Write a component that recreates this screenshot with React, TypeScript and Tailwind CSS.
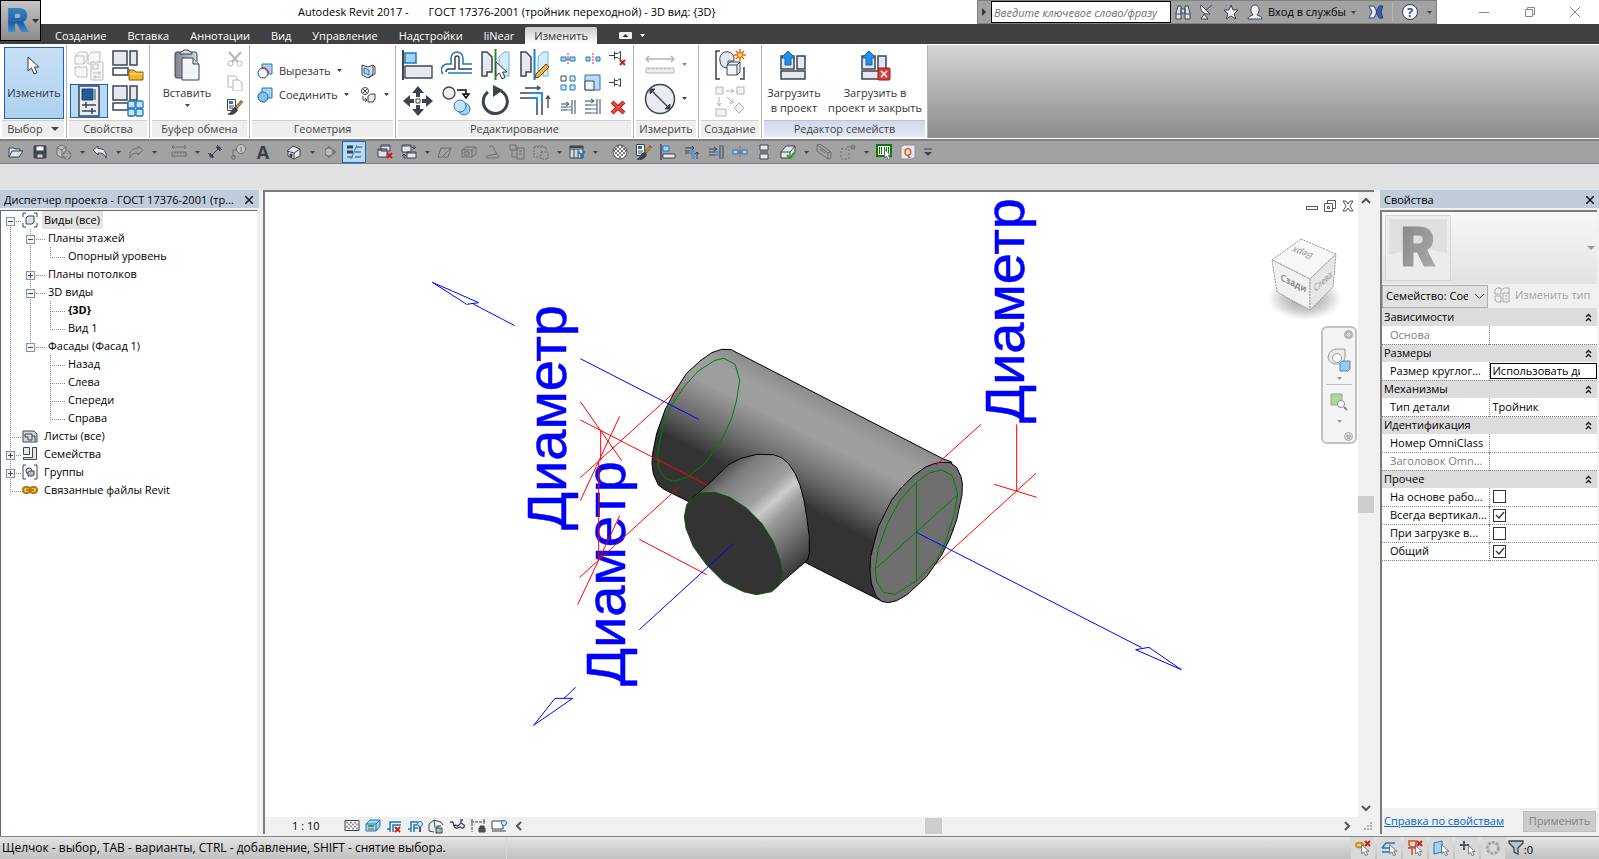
import { useState, type ReactNode } from 'react';

const INK = '#3b4452';
const BLUE = '#1d78bd';
const SKY = '#a6d3f2';
const MUTE = '#b4b4b4';

interface IconProps {
  w?: number;
  h?: number;
  children: ReactNode;
}

function Icon({ w = 16, h = w, children }: IconProps) {
  return (
    <svg width={w} height={h} viewBox={`0 0 ${w} ${h}`} fill="none" stroke={INK} className="shrink-0" aria-hidden="true">
      {children}
    </svg>
  );
}

function Caret({ color = '#444' }: { color?: string }) {
  return (
    <svg width="5" height="3" viewBox="0 0 5 3" fill={color} className="shrink-0" aria-hidden="true">
      <path d="M0 0h5L2.5 3z" />
    </svg>
  );
}

/* ---------- shared icon parts ---------- */

const Pointer = ({ x = 0, y = 0, s = 1 }) => (
  <path transform={`translate(${x} ${y}) scale(${s})`} d="M1 1v14l3.5-3 2.5 6 3-1.5-2.5-5.5h4.5z" fill="#fff" stroke="#333b48" />
);

const RedCross = ({ x = 0, y = 0 }) => (
  <path d={`M${x} ${y}l5 5m0-5l-5 5`} stroke="#c8201c" strokeWidth="2" />
);

const Frames = () => (
  <g fill="#e4e8ee" strokeWidth="1.5">
    <rect x="1" y="1" width="14" height="14" />
    <path d="M18 1h7v14h-7z" />
    <path d="M1 18h15v7H1z" fill="#fff" />
  </g>
);

const Trim = () => (
  <>
    <path d="M1 4h9M8 2l2 2-2 2M13 15V8M11 10l2-2 2 2" />
    <path d="M1 7h4M1 9h4" />
    <path d="M5 7h5v8M5 9h3v6" stroke="#1e88e5" />
  </>
);

const AlignIcon = () => (
  <Icon>
    <path d="M1 0v16" strokeWidth="1.500" />
    <path d="M3 2h6v5H3z" fill={SKY} stroke={BLUE} />
    <path d="M3 10h12v4H3z" fill="#eee" />
  </Icon>
);

const SplitIcon = () => (
  <Icon>
    <path d="M1 6h5v4H1zM10 6h5v4h-5zM6 8h4" fill={SKY} stroke={BLUE} />
    <path d="M8 2v12" stroke="#d23" strokeDasharray="2 1" />
  </Icon>
);

const ExtendIcon = () => (
  <Icon>
    <path d="M1 5h7M6 3l3 2-3 2M12 1v14M15 1v14" />
    <path d="M1 8h6M1 11h6" />
    <path d="M7 8h5M7 11h5" stroke="#1e88e5" />
  </Icon>
);

const BrushIcon = () => (
  <Icon>
    <path d="M.5 .5h8v11h-8z" fill="#fff" />
    <path d="M2 2h4v3H2z" fill={BLUE} stroke="none" />
    <path d="M2 7h5M2 9h4" />
    <path d="M15 2L9 9" stroke="#8a6a2a" strokeWidth="3" />
    <path d="M14.500 3L10 8" stroke="#e0b04a" />
    <path d="M1 15c3 0 3-4 6-6 2-1 4 1 3 3-2 3-5 4-9 3z" fill={INK} />
  </Icon>
);

const Ruler = ({ color = MUTE }) => (
  <g stroke={color}>
    <path d="M1 3h14M3 1L1 3l2 2M13 1l2 2-2 2M1 8h14v4H1zM4 8v2M7 8v2M10 8v2M13 8v2" />
  </g>
);

/* ---------- ribbon icons ---------- */

const FamilyTypesIcon = () => (
  <Icon w={32}>
    <g stroke="#bdbdbd" fill="#f7f7f7">
      <path d="M2 6l4-4h8v8l-3 4H2zM15 6l4-4h8v8l-2 4H15zM2 17h12v10H4l-2-3zM2 6h9v8" />
      <path d="M18 12h12v18H18z" />
      <path d="M20 14h5v5h-5zM20 23h8M20 27h8M26 21v4M22 25v4" />
    </g>
  </Icon>
);

const FolderIcon = () => (
  <Icon w={32}>
    <Frames />
    <path d="M17 20h5l2 2h7v8H17z" fill="#f0b62c" stroke="#8a5d0c" />
    <path d="M17 24h14" stroke="#fbe08a" />
  </Icon>
);

const PropertiesIcon = () => (
  <Icon w={32}>
    <path d="M6 1h20v30H6z" fill="#e9ecf0" strokeWidth="1.500" />
    <path d="M9 4h11v11H9z" fill="#215a94" stroke="#17426e" />
    <path d="M22 4v11" stroke="#8e98a4" strokeWidth="2" />
    <path d="M9 20h14M9 26h14M13 17v6M19 23v6" strokeWidth="1.500" />
  </Icon>
);

const CategoriesIcon = () => (
  <Icon w={32}>
    <Frames />
    <g fill="#c5e3f7" stroke={BLUE} strokeWidth="1.300">
      <rect x="16" y="16" width="7" height="7" rx="1" />
      <rect x="24" y="16" width="7" height="7" rx="1" />
      <rect x="16" y="24" width="7" height="7" rx="1" />
      <rect x="24" y="24" width="7" height="7" rx="1" />
    </g>
  </Icon>
);

const PasteIcon = () => (
  <Icon w={32}>
    <defs>
      <linearGradient id="board" x1="0" y1="0" x2="1" y2="0">
        <stop offset="0" stopColor="#7b828d" />
        <stop offset="1" stopColor="#d5d8dc" />
      </linearGradient>
    </defs>
    <rect x="4" y="3" width="22" height="26" rx="2" fill="url(#board)" />
    <path d="M9 5c0-3 3-2 4-4h4c1 2 4 1 4 4z" fill="#d9dde2" />
    <path d="M11 9h11l6 6v16H11z" fill="#f3f4f6" />
    <path d="M22 9v6h6" fill="#cfd4da" />
  </Icon>
);

const CutIcon = () => (
  <Icon>
    <g stroke={MUTE}>
      <path d="M2 1l9 10M14 1L5 11" strokeWidth="2" />
      <circle cx="3.500" cy="12.500" r="2.500" />
      <circle cx="12.500" cy="12.500" r="2.500" />
    </g>
  </Icon>
);

const CopyIcon = () => (
  <Icon>
    <g stroke={MUTE} fill="#fff">
      <path d="M1 1h7l2 2v9H1z" />
      <path d="M6 5h6l3 3v8H6z" />
    </g>
  </Icon>
);

const CutGeometryIcon = () => (
  <Icon>
    <path d="M5 1h10v10H5z" fill={SKY} stroke={BLUE} />
    <circle cx="6" cy="10" r="5" fill="#fff" />
    <path d="M5 5a5 5 0 0 1 6 5" stroke="#d22" strokeWidth="1.500" />
  </Icon>
);

const JoinGeometryIcon = () => (
  <Icon>
    <path d="M5 1h10v10h-4a5 5 0 1 1-6-6z" fill={SKY} stroke={BLUE} />
    <circle cx="6" cy="10" r="5" stroke={BLUE} fill="#8cbfe6" />
  </Icon>
);

const PaintFaceIcon = () => (
  <Icon>
    <path d="M2 2l6 2 5-2v9l-5 4-6-3z" fill="#dde1e6" />
    <path d="M4 5l5 2v5l-5-2z" fill={SKY} stroke={BLUE} />
    <path d="M13 2l2 2v7l-7 4" />
  </Icon>
);

const WallJoinIcon = () => (
  <Icon>
    <circle cx="5" cy="4" r="3.500" />
    <path d="M3 2l4 4M7 2L3 6M3 9v4h3M5 11l2 2-2 2" />
    <path d="M8 9l3-2h4v5l-2 3H8z" fill="#eceef1" />
  </Icon>
);

const BigAlignIcon = () => (
  <Icon w={32}>
    <path d="M1 1v30" strokeWidth="2" />
    <path d="M3 4h11v10H3z" fill={SKY} stroke={BLUE} strokeWidth="1.500" />
    <path d="M3 17h27v12H3z" fill="#e6e9ed" strokeWidth="1.300" />
  </Icon>
);

const OffsetIcon = () => (
  <Icon w={32}>
    <path d="M31 15h-9V9a6 6 0 0 0-12 0v6H7a6 6 0 0 0-5 10" stroke={BLUE} strokeWidth="1.500" />
    <path d="M31 20H18V9a2 2 0 0 0-4 0v11H8c-2 0-3 1-3 3" strokeWidth="1.500" />
    <path d="M31 24H7" stroke={BLUE} strokeWidth="1.500" />
  </Icon>
);

const MirrorPickIcon = () => (
  <Icon w={32}>
    <path d="M2 3h5l5 5v15H7v4H2z" fill="#e6e9ed" strokeWidth="1.500" />
    <path d="M29 3h-5l-5 5v15h5v4h5z" fill="#d5ebfa" stroke="#6fb0de" />
    <path d="M15.500 0v31" stroke="#2a8a2a" strokeWidth="2" />
    <Pointer x={15} y={12} />
  </Icon>
);

const MirrorDrawIcon = () => (
  <Icon w={32}>
    <path d="M2 3h5l5 5v15H7v4H2z" fill="#e6e9ed" strokeWidth="1.500" />
    <path d="M29 3h-5l-5 5v15h5v4h5z" fill="#d5ebfa" stroke="#6fb0de" />
    <path d="M15.500 0v31" stroke="#1e7fd2" strokeWidth="2" />
    <path d="M27 15l3 3-10 10-4 1 1-4z" fill="#f2b431" stroke="#5b4620" />
  </Icon>
);

const MoveIcon = () => (
  <Icon w={32}>
    <path d="M16 1l6 7h-4v4h-4V8h-4zM16 31l6-7h-4v-4h-4v4h-4zM1 16l7-6v4h4v4H8v4zM31 16l-7-6v4h-4v4h4v4z" fill={INK} stroke="none" />
    <path d="M14 14h4v4h-4z" />
  </Icon>
);

const CopyElementIcon = () => (
  <Icon w={32}>
    <circle cx="8" cy="8" r="6" fill="#eef0f2" strokeWidth="1.300" />
    <path d="M16 5h9v5M22 9l3 4 3-4z" stroke="#111" strokeWidth="1.500" />
    <circle cx="23" cy="24" r="6" fill={SKY} stroke={BLUE} />
    <circle cx="19" cy="21" r="6" fill="#c5e3f7" stroke={BLUE} />
  </Icon>
);

const RotateIcon = () => (
  <Icon w={32}>
    <path d="M8 7a12 12 0 1 0 13-1" strokeWidth="3" />
    <path d="M13 0l10 5-10 7z" fill={INK} stroke="none" />
  </Icon>
);

const TrimCornerIcon = () => (
  <Icon w={32}>
    <path d="M1 8h10M1 13h10M23 18v12M18 18v12" strokeWidth="1.500" />
    <path d="M11 8h12v10M11 13h7v6" stroke="#2290e4" strokeWidth="2" />
    <path d="M6 3h15M18 1l3 2-3 2M29 23V11M27 14l2-3 2 3" strokeWidth="1.300" />
  </Icon>
);

const SplitGapIcon = () => (
  <Icon>
    <path d="M1 6h4v4H1zM11 6h4v4h-4z" fill={SKY} stroke={BLUE} />
    <path d="M8 2v12" stroke="#d23" strokeDasharray="2 1" />
  </Icon>
);

const UnpinIcon = () => (
  <Icon w={18}>
    <path d="M0 5.500h5M5.500 1.500v8M5.500 3.500h3l3-2v8l-3-2h-3" />
    <RedCross x={11} y={10} />
  </Icon>
);

const PinIcon = () => (
  <Icon w={18}>
    <path d="M0 8.500h5M5.500 4.500v8M5.500 6.500h3l3-2v8l-3-2h-3" />
  </Icon>
);

const ArrayIcon = () => (
  <Icon w={18}>
    <path d="M2 2h5v5H2z" />
    <path d="M11 2h5v5h-5zM2 11h5v5H2zM11 11h5v5h-5z" fill="#cfe7f8" stroke={BLUE} />
  </Icon>
);

const ScaleIcon = () => (
  <Icon w={18}>
    <path d="M1 1h15v15H1z" fill="#b9dcf4" stroke={BLUE} />
    <path d="M1 7h9v9H1z" fill="#f2f3f5" />
  </Icon>
);

const ExtendManyIcon = () => (
  <Icon w={18}>
    <path d="M1 3h8M7 1l3 2-3 2M13 1v15M16 1v15" />
    <path d="M1 7h6M1 11h6M1 15h6" />
    <path d="M7 7h6M7 11h6M7 15h6" stroke="#1e88e5" />
  </Icon>
);

const DeleteIcon = () => (
  <Icon w={18}>
    <path d="M3 4l12 11M15 4L3 15" stroke="#a8201c" strokeWidth="4" />
    <path d="M3 4l12 11M15 4L3 15" stroke="#ee4b45" strokeWidth="2" />
  </Icon>
);

const MeasureIcon = () => (
  <Icon w={32} h={20}>
    <g stroke={MUTE}>
      <path d="M2 4h28M5 1L2 4l3 3M27 1l3 3-3 3" strokeWidth="1.500" />
      <path d="M2 13h28v5H2zM5 13v2M9 13v2M13 13v2M17 13v2M21 13v2M25 13v2" fill="#eee" />
    </g>
  </Icon>
);

const DiameterIcon = () => (
  <Icon w={32}>
    <circle cx="16" cy="16" r="14.500" fill="#e9ebee" strokeWidth="1.500" />
    <path d="M7 7l18 18" strokeWidth="1.500" />
    <path d="M6 6h5l-5 5zM26 26h-5l5-5z" fill={INK} />
  </Icon>
);

const CreateGroupIcon = () => (
  <Icon w={32}>
    <path d="M6 2H2v28h4M26 30h4V18" strokeWidth="1.500" />
    <path d="M6 12a7 7 0 0 1 14-4v4h-6v7a7 7 0 0 1-8-7z" fill="#e4e7eb" />
    <path d="M13 16l3-3h10v10l-3 3H13zM13 16h10v10M23 16l3-3" fill="#f4f5f6" />
    <path d="M26 0v12M20 6h12M22 2l8 8M30 2l-8 8" stroke="#e4661b" strokeWidth="1.500" />
    <circle cx="26" cy="6" r="2.500" fill="#ffe14a" stroke="#e4661b" />
  </Icon>
);

const CreateSimilarIcon = () => (
  <Icon w={32}>
    <g stroke={MUTE} fill="#f3f3f3">
      <path d="M2 2h7v7H2zM23 2h7v7h-7zM2 24h10v7H2zM25 18l5 5-5 5-5-5z" />
      <path d="M12 6h8M17 4l3 2-3 2M5 12v8M3 18l2 3 2-3M13 12l6 6M19 14v4h-4" fill="none" />
    </g>
  </Icon>
);

const LoadIcon = ({ close = false }) => (
  <Icon w={32}>
    <g fill="#e4e8ee" strokeWidth="1.500">
      <path d="M3 6h13v13H3zM19 6h8v13h-8zM3 21h24v8H3z" />
    </g>
    <path d="M10 1l7 7h-4v7H7V8H3z" fill="#2290ea" stroke="#1263ab" />
    {close && (
      <>
        <rect x="19" y="18" width="12" height="12" rx="1" fill="#d6413c" stroke="#8e1a17" />
        <path d="M22 21l6 6M28 21l-6 6" stroke="#fff" strokeWidth="1.500" />
      </>
    )}
  </Icon>
);

/* ---------- quick access toolbar ---------- */

const OFF = '#6f6f6f';

const quickItems: (ReactNode | 'caret' | 'gap')[] = [
  <Icon><path d="M1 13V4h5l1 1h5v2M1 13l3-6h11l-4 6z" fill="#dfe3e8" /></Icon>,
  <Icon><path d="M2 2h12v12H2z" fill={INK} /><path d="M4 2h8v5H4z" fill="#fff" /><path d="M5 10h6v4H5z" fill="#cfd3d8" /></Icon>,
  <Icon><path d="M1 4l4-3 5 2v8l-4 3-5-3zM1 4l5 2v8M6 6l4-3" fill="#bdbdbd" stroke={OFF} /><circle cx="11" cy="11" r="4" fill="#8a8a8a" stroke={OFF} /><path d="M7 11h8M11 7c-2 3-2 5 0 8M11 7c2 3 2 5 0 8" stroke="#bbb" /></Icon>,
  'caret',
  <Icon><path d="M1 6l5-4v2.500c6 0 9 3 8 9.500-1-4-4-5-8-5V11z" fill="#e9ecef" /></Icon>,
  'caret',
  <Icon><path d="M15 6l-5-4v2.500C4 4.500 1 7.500 2 14c1-4 4-5 8-5V11z" stroke={OFF} /></Icon>,
  'caret',
  'gap',
  <Icon><Ruler color={OFF} /></Icon>,
  'caret',
  <Icon><path d="M3 13L13 3M1 9l5 5M10 1l5 5" /><path d="M3 13V9l4 4zM13 3H9l4 4z" fill={INK} /></Icon>,
  <Icon><circle cx="10" cy="5" r="4.500" fill="#c4c4c4" stroke={OFF} /><path d="M5 6H2v6M10 3v5M1 12h3v3H1z" stroke={OFF} /></Icon>,
  <span className="text-lg leading-4 font-bold text-[#3b3f46]">A</span>,
  'gap',
  <Icon><path d="M1 7l6-5 7 3v7l-6 3-6-3V7M8 15V9l6-4M1 7l7 2" fill="#e6e9ec" /><path d="M4 10h2v3H4z" fill={INK} /></Icon>,
  'caret',
  <Icon><path d="M6 2l8 6-8 6z" fill="#7c7c7c" stroke={OFF} /><circle cx="7" cy="8" r="4" fill="#bcbcbc" stroke={OFF} /></Icon>,
  'thin',
  'gap',
  <Icon><path d="M4 1h9v6H4zM1 5h9v8H1z" fill="#dfe2e6" /><path d="M1 6h9M4 2h9" /><RedCross x={10} y={9} /></Icon>,
  <Icon><path d="M1 1h9v7H1zM6 8h9v6H6z" fill="#e6e9ec" /><path d="M1 2h9M6 9h9M13 1v4M11 3l2 2 2-2M3 11v3h2M1 12l2-2 2 2" /></Icon>,
  'caret',
  <Icon><path d="M1 13l3-9h10l-3 9zM6 12l8-8" stroke={OFF} /></Icon>,
  <Icon><path d="M1 6l4-3h10v7l-4 3H1zM1 6h10v7M11 6l4-3M3 8h5v3H3z" stroke={OFF} /></Icon>,
  <Icon><path d="M2 12l9-2c3 0 4 4 1 4H3c-2 0-3-2-1-2zM4 3c2-2 5-1 5 2l3 5" stroke={OFF} /></Icon>,
  <Icon><path d="M1 1h6v5H1zM3 6v7h4M8 4h7v11H8zM10 7h3M10 10h3" stroke={OFF} /></Icon>,
  <Icon><path d="M1 3h12v4M1 3v10h6M3 1v3M6 1v3M9 1v3M8 8h7v7H8z" stroke={OFF} strokeDasharray="2 1" /></Icon>,
  'caret',
  <Icon><path d="M1 2h13v12H1zM1 5h13M5 5v9M9 5v9" fill="#d5d9de" /><path d="M1 3h13" strokeWidth="2" /><path d="M10 7v2l2 1v5M15 7v2l-2 1v5" stroke={BLUE} strokeWidth="1.500" /></Icon>,
  'caret',
  'gap',
  <Icon>
    <circle cx="8" cy="8" r="7" fill="#fff" />
    <path d="M3 5h2M7 5h2M11 5h2M2 7h1M5 7h2M9 7h2M13 7h1M3 9h2M7 9h2M11 9h2M5 11h2M9 11h2M7 13h2M5 3h2M9 3h2" stroke="#777" strokeWidth="2" />
  </Icon>,
  <BrushIcon />,
  <AlignIcon />,
  <Icon><Trim /></Icon>,
  <ExtendIcon />,
  <SplitIcon />,
  <Icon><path d="M4 1h8v5H4zM4 10h8v5H4zM4 8h8" fill="#e6e9ec" /></Icon>,
  <Icon><path d="M1 8l5-6h9v6l-4 6H1zM1 8h9v6M10 8l5-6" fill="#e6e9ec" /><path d="M7 11l3 3 5-6" stroke="#2aa02a" strokeWidth="2" /></Icon>,
  'caret',
  <Icon><path d="M1 1l3-1 11 8v6l-3 1L1 7zM1 1l11 8v6M12 9l3-1M4 5l5 4" stroke={OFF} /></Icon>,
  <Icon><path d="M1 5h8v10H1z" stroke={OFF} strokeDasharray="2 2" /><circle cx="13" cy="3" r="2" stroke={OFF} /><path d="M7 3h8" stroke={OFF} /></Icon>,
  'caret',
  <Icon><path d="M1 1h14v11H1z" fill="#fff" stroke="#0b7a0b" strokeWidth="2" /><path d="M3.500 3v7M5.500 3v7M8.500 3v7M10.500 3v7M12.500 3v7" stroke="#0b7a0b" /><Pointer x={8} y={5} s={0.6} /></Icon>,
  <Icon><path d="M1 3l3-2h11v12l-3 2H1z" fill="#e8e8ec" stroke="#8d919b" /><text x="4" y="12" fontSize="10" fontWeight="700" fill="#e2561d" stroke="none" className="font-['Liberation_Sans',sans-serif]">Q</text></Icon>,
];

function QuickToolbar() {
  return (
    <div className="flex h-[25px] shrink-0 items-center border-t-2 border-b border-[#808080] bg-[#a2a2a2] pl-1">
      {quickItems.map((item, i) => {
        if (item === 'gap') return <span key={i} className="w-[7px]" />;
        if (item === 'caret') {
          return (
            <button key={i} aria-label="Ещё" className="flex h-5 w-3 items-center justify-center">
              <Caret />
            </button>
          );
        }
        if (item === 'thin') {
          return (
            <button key={i} aria-label="Тонкие линии" className="flex h-[22px] w-6 items-center justify-center border border-[#1a66b8] bg-[#b8d9f4]">
              <Icon>
                <path d="M1 3h6M1 8h6" strokeWidth="3" />
                <path d="M1 13h6M10 3h6M9 8h6M9 13h6" />
                <path d="M11 1L5 15" stroke="#1e88e5" />
              </Icon>
            </button>
          );
        }
        return (
          <button key={i} className="flex h-5 w-6 items-center justify-center">
            {item}
          </button>
        );
      })}
      <button aria-label="Настройка панели" className="flex h-5 w-4 items-center justify-center">
        <Icon w={8}>
          <path d="M0 1h8" />
          <path d="M0 4h8L4 8z" fill={INK} stroke="none" />
        </Icon>
      </button>
    </div>
  );
}

/* ---------- title bar, tabs ---------- */

function TitleBar() {
  return (
    <header className="flex h-6 shrink-0 items-center bg-white text-black">
      <div className="flex flex-1 gap-5 pl-[298px] whitespace-pre">
        <span>Autodesk Revit 2017 -</span>
        <span>ГОСТ 17376-2001 (тройник переходной) - 3D вид: {'{3D}'}</span>
      </div>
      <div className="flex h-6 w-[460px] items-center border border-[#808080] bg-[#a2a2a2] pl-1">
        <svg width="4" height="8" viewBox="0 0 4 8" fill="#333" className="mr-[5px]" aria-hidden="true">
          <path d="M0 0l4 4-4 4z" />
        </svg>
        <input
          aria-label="Поиск"
          placeholder="Введите ключевое слово/фразу"
          className="h-[22px] w-[180px] border border-black bg-white px-[2px] italic placeholder:text-[#707070]"
        />
        <button aria-label="Найти" className="ml-1">
          <Icon>
            <path d="M1 15V9l2-7h3v13zM10 15V2h3l2 7v6zM6 5h4v4H6zM1 10h5M10 10h5" fill="#dfe3e8" />
          </Icon>
        </button>
        <button aria-label="Центр связи" className="ml-2">
          <Icon>
            <path d="M2 1c-2 5 3 10 9 9zM7 6l6-5M2 15l3-5 4 5z" fill="#eef0f3" />
          </Icon>
        </button>
        <button aria-label="Избранное" className="ml-2">
          <Icon>
            <path d="M8 1l2 5h5l-4 4 2 5-5-3-5 3 2-5-4-4h5z" fill="#eef0f3" />
          </Icon>
        </button>
        <button className="ml-2 flex items-center gap-[5px] whitespace-nowrap text-black">
          <Icon>
            <path d="M1 15c0-3 3-3 5-4-3-3-3-10 2-10s5 7 2 10c2 1 5 1 5 4z" fill="#eef0f3" />
          </Icon>
          Вход в службы
          <Caret />
        </button>
        <button aria-label="Exchange Apps" className="ml-3">
          <Icon>
            <path d="M1 2h5l3 6-3 6H1l3-6z" fill="#eef0f3" stroke="#2b3f7c" />
            <path d="M15 2h-4L8 8l3 6h4l-2-6z" fill="#3c5cab" stroke="#2b3f7c" />
          </Icon>
        </button>
        <span className="ml-2 h-5 w-px bg-[#b2b2b2]" />
        <button aria-label="Справка" className="ml-2 flex items-center gap-2">
          <svg width="18" height="18" viewBox="0 0 18 18" aria-hidden="true">
            <circle cx="9" cy="9" r="7.500" fill="#fff" stroke="#2e3a52" />
            <text x="9" y="14" textAnchor="middle" fontSize="13" fontWeight="700" fill="#2456b4">?</text>
          </svg>
          <Caret />
        </button>
      </div>
      <div className="flex w-[162px] items-center justify-between pr-[18px] pl-[41px]">
        <button aria-label="Свернуть">
          <Icon w={12}><path d="M1 6.500h10" stroke="#888" /></Icon>
        </button>
        <button aria-label="Восстановить">
          <Icon w={12}><path d="M1.500 3.500h7v7h-7zM3.500 3.500v-2h7v7h-2" stroke="#888" /></Icon>
        </button>
        <button aria-label="Закрыть">
          <Icon w={12}><path d="M1 1l10 10M11 1L1 11" stroke="#888" /></Icon>
        </button>
      </div>
    </header>
  );
}

const TABS = ['Создание', 'Вставка', 'Аннотации', 'Вид', 'Управление', 'Надстройки', 'liNear', 'Изменить'];

function TabBar() {
  const [active, setActive] = useState('Изменить');

  return (
    <nav className="flex h-5 shrink-0 items-end bg-[#404040] pl-[45px]">
      {TABS.map(tab => (
        <button
          key={tab}
          onClick={() => setActive(tab)}
          className={
            tab === active
              ? 'h-[17px] rounded-t-xs bg-linear-to-b from-[#c9c9c9] to-white px-[9px] leading-4 text-[#333]'
              : 'h-[17px] pr-[11px] pl-[10px] leading-4 text-white'
          }
        >
          {tab}
        </button>
      ))}
      <button aria-label="Свернуть ленту" className="ml-[22px] flex h-[17px] items-center gap-2">
        <Icon w={13} h={7}>
          <rect width="13" height="7" rx="1" fill="#eee" stroke="none" />
          <path d="M3.500 5l3-3 3 3z" fill="#333" stroke="none" />
        </Icon>
        <Caret color="#fff" />
      </button>
    </nav>
  );
}

/* ---------- ribbon ---------- */

interface PanelProps {
  title: ReactNode;
  className: string;
  accent?: boolean;
  children: ReactNode;
}

function Panel({ title, className, accent, children }: PanelProps) {
  return (
    <section className={`flex shrink-0 flex-col border-r border-[#b4b4b4] bg-white ${className}`}>
      <div className="flex h-[75px] items-center">{children}</div>
      <h2
        className={`mx-[2px] flex h-[17px] items-center justify-center gap-2 border-t leading-4 whitespace-nowrap text-[#444] ${
          accent ? 'border-[#bcc3da] bg-linear-to-b from-[#d3d8e8] to-[#e6e9f4]' : 'border-[#d0d0d0] bg-[#eeeeee]'
        }`}
      >
        {title}
      </h2>
    </section>
  );
}

function Ribbon() {
  return (
    <div className="flex h-[95px] shrink-0 border-y border-white bg-linear-to-b from-[#d6d6d6] to-[#8c8c8c] text-[#333]">
      <Panel className="w-[67px]" title={<>Выбор <svg width="8" height="4" viewBox="0 0 8 4" fill="#444"><path d="M0 0h8L4 4z" /></svg></>}>
        <button className="ml-1 flex h-[72px] w-[60px] flex-col items-center border border-[#1763b5] bg-linear-to-b from-[#c6dff5] to-[#aed1ef] pt-2">
          <Icon w={14} h={20}><Pointer /></Icon>
          <span className="mt-[9px] leading-4">Изменить</span>
        </button>
      </Panel>

      <Panel className="w-[83px]" title="Свойства">
        <div className="grid grid-cols-2 gap-x-[1px] pl-[3px]">
          <button aria-label="Типоразмеры" className="flex h-9 w-[38px] items-center justify-center"><FamilyTypesIcon /></button>
          <button aria-label="Категории" className="flex h-9 w-[38px] items-center justify-center"><FolderIcon /></button>
          <button aria-label="Свойства" className="flex h-[34px] w-[38px] items-center justify-center border border-[#1763b5] bg-[#b8d8f3]"><PropertiesIcon /></button>
          <button aria-label="Параметры" className="flex h-[34px] w-[38px] items-center justify-center"><CategoriesIcon /></button>
        </div>
      </Panel>

      <Panel className="w-[100px]" title="Буфер обмена">
        <button className="flex h-[72px] w-[74px] flex-col items-center pt-[2px]">
          <PasteIcon />
          <span className="mt-1 mb-[3px] leading-4">Вставить</span>
          <Caret />
        </button>
        <div className="flex flex-col gap-2 pl-[3px]">
          <button aria-label="Вырезать в буфер"><CutIcon /></button>
          <button aria-label="Копировать в буфер"><CopyIcon /></button>
          <button aria-label="Копировать свойства"><BrushIcon /></button>
        </div>
      </Panel>

      <Panel className="w-[146px]" title="Геометрия">
        <div className="flex w-[110px] flex-col gap-2 pl-[7px]">
          <button className="flex items-center gap-[6px] leading-4"><CutGeometryIcon />Вырезать <Caret /></button>
          <button className="flex items-center gap-[6px] leading-4"><JoinGeometryIcon />Соединить <Caret /></button>
        </div>
        <div className="flex flex-col gap-2">
          <button aria-label="Раскрасить"><PaintFaceIcon /></button>
          <button aria-label="Соединение стен" className="flex items-center gap-2"><WallJoinIcon /><Caret /></button>
        </div>
      </Panel>

      <Panel className="w-[238px]" title="Редактирование">
        <div className="grid grid-cols-4 gap-x-[7px] gap-y-1 pl-[6px]">
          <button aria-label="Выровнять"><BigAlignIcon /></button>
          <button aria-label="Смещение"><OffsetIcon /></button>
          <button aria-label="Зеркало — выбрать ось"><MirrorPickIcon /></button>
          <button aria-label="Зеркало — нарисовать ось"><MirrorDrawIcon /></button>
          <button aria-label="Перенести"><MoveIcon /></button>
          <button aria-label="Копировать"><CopyElementIcon /></button>
          <button aria-label="Повернуть"><RotateIcon /></button>
          <button aria-label="Обрезать до угла"><TrimCornerIcon /></button>
        </div>
        <div className="grid grid-cols-3 items-center justify-items-center gap-x-[7px] gap-y-[6px] pl-2">
          <button aria-label="Разделить"><SplitIcon /></button>
          <button aria-label="Разделить с зазором"><SplitGapIcon /></button>
          <button aria-label="Открепить"><UnpinIcon /></button>
          <button aria-label="Массив"><ArrayIcon /></button>
          <button aria-label="Масштаб"><ScaleIcon /></button>
          <button aria-label="Закрепить"><PinIcon /></button>
          <button aria-label="Удлинить"><ExtendIcon /></button>
          <button aria-label="Удлинить несколько"><ExtendManyIcon /></button>
          <button aria-label="Удалить"><DeleteIcon /></button>
        </div>
      </Panel>

      <Panel className="w-[65px]" title="Измерить">
        <div className="flex flex-col gap-2 pt-1 pl-[10px]">
          <button aria-label="Измерить" className="flex items-center gap-[6px]"><MeasureIcon /><Caret color="#888" /></button>
          <button aria-label="Размер диаметра" className="flex items-center gap-[6px]"><DiameterIcon /><Caret /></button>
        </div>
      </Panel>

      <Panel className="w-[63px]" title="Создание">
        <div className="flex flex-col gap-1 pl-[15px]">
          <button aria-label="Создать группу"><CreateGroupIcon /></button>
          <button aria-label="Создать подобный"><CreateSimilarIcon /></button>
        </div>
      </Panel>

      <Panel accent className="w-[166px]" title="Редактор семейств">
        <button className="flex h-[72px] w-[64px] flex-col items-center pt-[3px] leading-[15px]">
          <LoadIcon />
          <span className="mt-[3px]">Загрузить<br />в проект</span>
        </button>
        <button className="flex h-[72px] w-[98px] flex-col items-center pt-[3px] leading-[15px] whitespace-nowrap">
          <LoadIcon close />
          <span className="mt-[3px]">Загрузить в<br />проект и закрыть</span>
        </button>
      </Panel>
    </div>
  );
}

/* ---------- project browser ---------- */

interface TreeRow {
  label: string;
  level: 0 | 1 | 2;
  state?: 'open' | 'closed';
  last?: boolean;
  inViews?: boolean;
  icon?: ReactNode;
  bold?: boolean;
}

const TREE: TreeRow[] = [
  { label: 'Виды (все)', level: 0, state: 'open', icon: <><path d="M4 1H1v4M12 1h3v4M4 15H1v-4M12 15h3v-4" /><path d="M4 6l2-2h6v6l-2 2H4z" fill="#dfe3e8" /></> },
  { label: 'Планы этажей', level: 1, state: 'open' },
  { label: 'Опорный уровень', level: 2, last: true, inViews: true },
  { label: 'Планы потолков', level: 1, state: 'closed' },
  { label: '3D виды', level: 1, state: 'open' },
  { label: '{3D}', level: 2, bold: true, inViews: true },
  { label: 'Вид 1', level: 2, last: true, inViews: true },
  { label: 'Фасады (Фасад 1)', level: 1, state: 'open', last: true },
  { label: 'Назад', level: 2 },
  { label: 'Слева', level: 2 },
  { label: 'Спереди', level: 2 },
  { label: 'Справа', level: 2, last: true },
  { label: 'Листы (все)', level: 0, icon: <><path d="M1 3h11l3 3v8H1z" fill="#d5d9de" /><path d="M3 6h7v6H6V9H3zM10 8h3v5" /></> },
  { label: 'Семейства', level: 0, state: 'closed', icon: <path d="M1.500 1.500h6v7h-6zM10.500 1.500h4v12h-13v-2h9z" fill="#e6e9ec" /> },
  { label: 'Группы', level: 0, state: 'closed', icon: <><path d="M4 1H1v14h3M12 1h3v14h-3" /><circle cx="7" cy="7" r="3" fill="#dfe3e8" /><path d="M6 8l2-1h4v4l-2 1H6z" fill="#b6bcc5" /></> },
  { label: 'Связанные файлы Revit', level: 0, last: true, icon: <g stroke="#b07b0a" strokeWidth="2"><rect x="1" y="5" width="7" height="6" rx="3" fill="#f6cf57" /><rect x="8" y="5" width="7" height="6" rx="3" fill="#f6cf57" /><path d="M4 8h8" /></g> },
];

function TreeGuides({ row, index }: { row: TreeRow; index: number }) {
  const x = 8 + row.level * 20;
  const width = [40, 46, 66][row.level];
  const end = [20, 43, 63][row.level];
  const rootLast = row.level === 0 && row.last;

  return (
    <svg width={width} height="18" viewBox={`0 0 ${width} 18`} fill="none" stroke="#8c8c8c" shapeRendering="crispEdges" className="shrink-0" aria-hidden="true">
      <g strokeDasharray="1 1">
        <path d={`M8.500 ${index === 0 ? 10 : 0}V${rootLast ? 10 : 18}`} />
        {row.level === 1 && <path d={`M28.500 0V${row.last ? 10 : 18}`} />}
        {row.level === 2 && row.inViews && <path d="M28.500 0V18" />}
        {row.level === 2 && <path d={`M48.500 0V${row.last ? 10 : 18}`} />}
        <path d={`M${x} 10.500H${end}`} />
      </g>
      {row.state && (
        <>
          <rect x={x - 3.5} y="6.500" width="8" height="8" fill="#f4f4f4" stroke="#8a8f9c" />
          <path d={`M${x - 2} 10.500h5`} stroke="#2b4a9a" />
          {row.state === 'closed' && <path d={`M${x + 0.5} 8v5`} stroke="#2b4a9a" />}
        </>
      )}
      {row.icon && <g transform="translate(20 1)" stroke={INK} shapeRendering="auto">{row.icon}</g>}
    </svg>
  );
}

function ProjectBrowser() {
  return (
    <aside className="flex w-[259px] shrink-0 flex-col">
      <div className="flex h-[18px] items-center justify-between bg-[#bfcddb] px-1 pt-[2px] text-black">
        <h2 className="whitespace-nowrap">Диспетчер проекта - ГОСТ 17376-2001 (тр...</h2>
        <button aria-label="Закрыть диспетчер" className="px-[2px]">
          <Icon w={8}><path d="M0 0l8 8M8 0L0 8" stroke="#111" strokeWidth="1.500" /></Icon>
        </button>
      </div>
      <ul className="mt-[2px] mr-[2px] flex-1 border-t border-l border-[#696969] bg-white pl-px">
        {TREE.map((row, i) => (
          <li key={row.label} className="flex h-[18px] items-center text-black">
            <TreeGuides row={row} index={i} />
            <span className={`leading-[18px] whitespace-nowrap ${row.bold ? 'font-bold' : ''} ${i === 0 ? 'bg-[#e3e3e3] pr-[3px]' : ''} ${row.level === 0 ? 'pl-[2px]' : ''}`}>
              {row.label}
            </span>
          </li>
        ))}
      </ul>
    </aside>
  );
}

/* ---------- 3D view ---------- */

const DIAMETERS = [
  { x: 301, y: 338 },
  { x: 360, y: 494 },
  { x: 759, y: 231 },
];

function TeeModel() {
  return (
    <svg className="absolute inset-0 h-full w-full" role="img" aria-label="Тройник переходной">
      <defs>
        <linearGradient id="run" gradientUnits="userSpaceOnUse" x1="285" y1="65" x2="72" y2="479">
          <stop offset="0" stopColor="#8c8c8c" />
          <stop offset=".12" stopColor="#9e9e9e" />
          <stop offset=".26" stopColor="#9e9e9e" />
          <stop offset=".48" stopColor="#6e6e6e" />
          <stop offset=".68" stopColor="#333" />
          <stop offset="1" stopColor="#333" />
        </linearGradient>
        <linearGradient id="branch" gradientUnits="userSpaceOnUse" x1="200" y1="467" x2="442" y2="742">
          <stop offset="0" stopColor="#555" />
          <stop offset=".1" stopColor="#7c7c7c" />
          <stop offset=".35" stopColor="#a0a0a0" />
          <stop offset=".46" stopColor="#ccc" />
          <stop offset=".58" stopColor="#9c9c9c" />
          <stop offset=".8" stopColor="#6a6a6a" />
          <stop offset="1" stopColor="#3a3a3a" />
        </linearGradient>
      </defs>

      {DIAMETERS.map(d => (
        <text key={d.x} transform={`translate(${d.x} ${d.y}) rotate(-90)`} fontSize="56" fill="#00f" stroke="#00f" strokeWidth=".5" className="font-['Liberation_Sans',sans-serif]">
          Диаметр
        </text>
      ))}

      <g transform="translate(375 138) scale(.33333)" fill="none" strokeWidth="3" strokeLinejoin="round">
        <g stroke="#000">
          <path
            d="M285 65L275 59L245 58L215 68L180 93L140 130L105 183L75 240L50 310L38 370L36 400L40 432L55 465L72 478L148 516L493 696L730 816L940 600L935 396L910 387Z"
            fill="url(#run)"
          />
          <path
            d="M880 402L900 397L930 398L950 412L963 440L967 460L966 495L950 570L930 625L905 675L860 740L800 795L770 812L745 818L725 814L708 798L694 760L690 720L692 680L715 590L755 510L785 472L820 438L855 412Z"
            fill="#6f6f6f"
          />
          <path
            d="M150 510L200 467L265 405L300 386L350 373L400 374L425 383L445 400L465 430L480 465L492 510L500 560L508 620L508 670L503 690L393 784L178 489Z"
            fill="url(#branch)"
          />
        </g>
        <path
          d="M150 510L178 489L225 487L270 502L320 535L365 580L400 635L420 690L428 730L418 765L395 785L350 794L310 785L250 755L200 705L160 650L138 595L133 560L140 525Z"
          fill="#333"
          stroke="#0a5a0a"
        />
        <g stroke="#008000">
          <path d="M252 85L285 103L299 150L290 210L275 265L245 330L195 400L145 440L105 454L75 445L57 417L53 370L68 290L95 225L135 167L175 123L225 91Z" />
          <path d="M905 420L937 437L953 490L945 545L915 640L890 690L830 752L765 793L730 787L710 755L706 715L715 655L740 585L780 510L830 456L870 428Z" />
          <path d="M829 458V755M706 717L950 497" />
        </g>
      </g>

      {/* reference dimension lines */}
      <g transform="translate(155 78) scale(.33333)" fill="none" strokeWidth="3">
        <path
          stroke="#f00"
          d="M481 395L605 572M481 450L860 645M599 439L481 692M775 356L481 623M542 482V572M536 575V868M775 653L479 922M599 737L473 1004M658 808L860 914"
        />
        <path stroke="#f00" d="M1683 463L1548 585M1790 463V663M1723 643L1850 682M1848 610L1548 883" />
        <path stroke="#00f" d="M481 266L836 448M940 821L658 1079M160 102L284 167M37 37L140 103L176 98ZM467 1252L432 1285M405 1285H458L341 1366Z" />
        <path stroke="#00f" d="M1489 787L2165 1133M2147 1139L2187 1132L2284 1199Z" />
      </g>
    </svg>
  );
}

function ViewCube() {
  return (
    <svg width="80" height="88" viewBox="0 0 80 88" className="absolute top-[42px] right-[14px]" role="img" aria-label="Видовой куб">
      <defs>
        <radialGradient id="cubeShadow">
          <stop offset="0" stopColor="#777" stopOpacity=".8" />
          <stop offset=".6" stopColor="#888" stopOpacity=".4" />
          <stop offset="1" stopColor="#888" stopOpacity="0" />
        </radialGradient>
      </defs>
      <ellipse cx="41" cy="65" rx="37" ry="21" fill="url(#cubeShadow)" />
      <g stroke="#999" strokeDasharray="2 1">
        <path d="M37 5L72 20 46 45 8 26z" fill="#f7f7f7" />
        <path d="M8 26L46 45V76L13 58z" fill="#f1f1f1" />
        <path d="M72 20L46 45V76L69 53z" fill="#e6e6e6" />
      </g>
      <g fontSize="9" fill="#8f8f8f">
        <text transform="translate(50 20) rotate(200) skewX(-20)">Верх</text>
        <text transform="translate(16 46) rotate(26) skewX(15)" fontWeight="700">Сзади</text>
        <text transform="translate(51 58) rotate(-42) skewX(-30)" fontSize="8">Слева</text>
      </g>
    </svg>
  );
}

function NavigationBar() {
  return (
    <div className="absolute top-[134px] right-px flex h-[118px] w-9 flex-col items-center rounded-md border-2 border-[#c2c2c2] bg-[#f4f4f4]">
      <button aria-label="Закрыть панель навигации" className="mt-[2px] mr-[2px] self-end">
        <Icon w={9}><circle cx="4.500" cy="4.500" r="4" fill="#bbb" stroke="#aaa" /><path d="M3 3l3 3M6 3L3 6" stroke="#fff" /></Icon>
      </button>
      <button aria-label="Штурвал" className="mt-2">
        <Icon w={26}>
          <path d="M2 11a9 9 0 0 1 9-9h8v9a9 9 0 0 1-17 0z" fill="#ececec" stroke="#9a9a9a" />
          <circle cx="11" cy="11" r="4.500" fill="#fff" stroke="#9a9a9a" />
          <path d="M14 16l2-2h8v8l-2 2h-8z" fill="#9ec7ec" stroke="#4f86b8" />
        </Icon>
      </button>
      <button aria-label="Выбор штурвала" className="py-1"><Caret color="#999" /></button>
      <span className="w-[26px] border-t border-[#bbb]" />
      <button aria-label="Масштаб области" className="mt-2">
        <Icon w={18}>
          <path d="M1 1h11v11H1z" fill="#b3d3a3" stroke="#8fae80" />
          <circle cx="11" cy="11" r="3.500" fill="#fff" stroke="#888" />
          <path d="M14 14l3 3" stroke="#888" strokeWidth="2" />
        </Icon>
      </button>
      <button aria-label="Выбор масштаба" className="py-[9px]"><Caret color="#999" /></button>
      <button aria-label="Параметры панели навигации" className="mt-auto mr-[2px] mb-[2px] self-end">
        <Icon w={9}><circle cx="4.500" cy="4.500" r="4" fill="#ddd" stroke="#aaa" /><path d="M2 4h5M3 6h3" stroke="#888" /></Icon>
      </button>
    </div>
  );
}

const Chevron = ({ d }: { d: string }) => (
  <Icon w={10}><path d={d} stroke="#555" strokeWidth="2" /></Icon>
);

const VIEW_CONTROLS: { name: string; art: ReactNode }[] = [
  { name: 'Уровень детализации', art: <><path d="M1 2.500h14v10H1z" fill="#fff" /><path d="M2 4.500h13M2 8.500h13" stroke="#999" strokeDasharray="2 2" strokeWidth="2" /><path d="M4 6.500h11M4 10.500h11" stroke="#999" strokeDasharray="2 2" strokeWidth="2" /></> },
  { name: 'Визуальный стиль', art: <><path d="M1 6l4-4h10v6l-4 5H1zM1 6h10v7M11 6l4-4" fill={SKY} stroke={BLUE} /><path d="M3 8h6" stroke="#3a3" strokeWidth="2" /><path d="M3 11h6" stroke="#c33" /></> },
  { name: 'Подрезка вида', art: <><path d="M4 14V4h11M1 11h3M7 14V7h8" stroke={BLUE} strokeWidth="1.500" /><RedCross x={9} y={9} /></> },
  { name: 'Границы подрезки', art: <><path d="M4 14V4h7M1 11h3M7 14V7h3M7 10h4" stroke={BLUE} strokeWidth="1.500" /><circle cx="13" cy="6" r="2.500" fill="#d5ebfa" stroke={BLUE} /><path d="M13 9v5" stroke="#555" strokeWidth="2" /></> },
  { name: 'Блокировка вида', art: <><path d="M1 6l5-4 7 2 2 3M1 6v7l5 1M6 2l1 8" fill="#eee" /><path d="M8 10h6v5H8zM9 10V8h4" fill="#9cc0b4" /></> },
  { name: 'Временное скрытие', art: <path d="M1 4h3M4 4l1 4a3 3 0 0 0 4 2l2-1 2 1a2 2 0 0 0 2-3l-3-2-3 3-4-1M12 5V2h2" strokeWidth="1.300" /> },
  { name: 'Показ скрытого', art: <><path d="M2 1v13M1 4h14M14 1v5" strokeDasharray="3 1" /><path d="M9 10h6v4H9zM10 10V8h4v2" fill="#555" /></> },
  { name: 'Свойства вида', art: <><path d="M1 3h11v8H1zM1 13h14" fill="#fff" /><circle cx="13" cy="5" r="2.500" fill="#d5ebfa" stroke={BLUE} /></> },
];

function Viewport() {
  return (
    <main className="mb-[2px] ml-1 flex min-w-0 flex-1 flex-col border-t-2 border-l-2 border-[#7c7c7c] bg-[#f0f0f0]">
      <div className="flex min-h-0 flex-1">
        <div className="relative min-w-0 flex-1 overflow-hidden bg-white">
          <TeeModel />
          <div className="absolute top-2 right-1 flex gap-[6px]">
            <button aria-label="Свернуть вид"><Icon w={12}><path d="M.5 6.500h11v3H.5z" stroke="#555" /></Icon></button>
            <button aria-label="Развернуть вид"><Icon w={12}><path d="M.5 3.500h8v8h-8zM3.500 3V.5h8v8H9M3.500 6.500h2v2h-2z" stroke="#555" /></Icon></button>
            <button aria-label="Закрыть вид"><Icon w={12}><path d="M1 1h3l2 3 2-3h3L8 6l3 5H8L6 8l-2 3H1l3-5z" stroke="#555" /></Icon></button>
          </div>
          <ViewCube />
          <NavigationBar />
        </div>
        <div className="flex w-4 flex-col items-center justify-between py-1">
          <Chevron d="M1 7l4-4 4 4" />
          <span className="h-[17px] w-full bg-[#cdcdcd]" />
          <Chevron d="M1 3l4 4 4-4" />
        </div>
      </div>
      <div className="flex h-[17px] items-center pl-[27px]">
        <button className="mr-6 w-7 text-left whitespace-nowrap text-black">1 : 10</button>
        <div className="flex gap-[5px]">
          {VIEW_CONTROLS.map(c => (
            <button key={c.name} aria-label={c.name}><Icon>{c.art}</Icon></button>
          ))}
        </div>
        <div className="ml-[7px] flex flex-1 items-center justify-between">
          <Chevron d="M7 1L3 5l4 4" />
          <span className="h-4 w-[17px] bg-[#cdcdcd]" />
          <Chevron d="M3 1l4 4-4 4" />
        </div>
        <span className="ml-3 w-[10px]"><Icon w={8}><path d="M6 1h2M3 4h2M6 4h2M0 7h2M3 7h2M6 7h2" stroke="#b0b0b0" strokeWidth="2" /></Icon></span>
      </div>
    </main>
  );
}

/* ---------- properties ---------- */

interface PropRow {
  name: string;
  value?: string;
  checked?: boolean;
  muted?: boolean;
  editing?: boolean;
}

const GROUPS: { title: string; rows: PropRow[] }[] = [
  { title: 'Зависимости', rows: [{ name: 'Основа', value: '', muted: true }] },
  { title: 'Размеры', rows: [{ name: 'Размер круглог...', value: 'Использовать диаметр', editing: true }] },
  { title: 'Механизмы', rows: [{ name: 'Тип детали', value: 'Тройник' }] },
  { title: 'Идентификация', rows: [{ name: 'Номер OmniClass', value: '' }, { name: 'Заголовок Omn...', value: '', muted: true }] },
  {
    title: 'Прочее',
    rows: [
      { name: 'На основе рабо...', checked: false },
      { name: 'Всегда вертикал...', checked: true },
      { name: 'При загрузке в...', checked: false },
      { name: 'Общий', checked: true },
    ],
  },
];

function PropValue({ row }: { row: PropRow }) {
  if (row.checked !== undefined) {
    return (
      <span className="relative ml-[3px] block size-[13px]">
        <input type="checkbox" aria-label={row.name} defaultChecked={row.checked} className="peer block size-[13px] appearance-none border border-[#333] bg-white" />
        <svg width="13" height="13" viewBox="0 0 13 13" fill="none" stroke="#333" strokeWidth="1.300" className="pointer-events-none absolute inset-0 hidden peer-checked:block">
          <path d="M3 6l3 3 5-6" />
        </svg>
      </span>
    );
  }
  if (row.editing) {
    return <input aria-label={row.name} defaultValue={row.value} className="block h-4 w-full border border-black bg-white pr-4 pl-[2px] outline-none" />;
  }
  return <span className="pl-[3px]">{row.value}</span>;
}

function PropertiesPanel() {
  return (
    <aside className="mb-[2px] ml-[6px] flex w-[219px] shrink-0 flex-col text-black">
      <div className="flex h-[18px] items-center justify-between bg-[#bfcddb] px-1 pt-[2px]">
        <h2>Свойства</h2>
        <button aria-label="Закрыть свойства" className="px-[1px]">
          <Icon w={8}><path d="M0 0l8 8M8 0L0 8" stroke="#111" strokeWidth="1.500" /></Icon>
        </button>
      </div>
      <div className="mt-[2px] mr-[2px] flex flex-1 flex-col border-t-2 border-l-2 border-[#7c7c7c] bg-white">
        <div className="flex h-[72px] items-center justify-between bg-linear-to-b from-[#f8f8f8] to-[#e2e2e2] pr-[2px] pl-[3px]">
          <svg width="66" height="66" viewBox="0 0 66 66" aria-hidden="true">
            <defs>
              <linearGradient id="thumbR" x1="0" y1="0" x2="1" y2="1">
                <stop offset="0" stopColor="#868686" />
                <stop offset="1" stopColor="#acacac" />
              </linearGradient>
            </defs>
            <rect x=".5" y=".5" width="65" height="65" fill="#ececec" stroke="#d4d4d4" />
            <path d="M4 4h58v34l-30-6-28 8z" fill="#e0e0e0" />
            <text x="16" y="50" fontSize="52" fontWeight="700" fill="url(#thumbR)" stroke="url(#thumbR)" strokeWidth="3" className="font-['Roboto',sans-serif]">R</text>
          </svg>
          <svg width="8" height="4" viewBox="0 0 8 4" fill="#999" aria-hidden="true"><path d="M0 0h8L4 4z" /></svg>
        </div>
        <div className="flex h-6 items-center bg-[#f0f0f0]">
          <div className="relative">
            <select aria-label="Семейство" className="block h-[23px] w-[106px] appearance-none border border-[#adadad] bg-[#e1e1e1] pr-[19px] pl-[3px]">
              <option>Семейство: Соединительные детали</option>
            </select>
            <svg width="9" height="5" viewBox="0 0 9 5" fill="none" stroke="#444" className="pointer-events-none absolute top-[9px] right-1">
              <path d="M0 0l4.500 4.500L9 0" />
            </svg>
          </div>
          <button disabled className="ml-[6px] flex items-center gap-[5px] pb-[2px] whitespace-nowrap text-[#a0a0a0]">
            <Icon>
              <path d="M1 3l2-2h4v6H1zM8 3l2-2h5v5M1 9h6v6H3l-2-2zM9 6h6v9H9zM11 9h2M11 12h2" stroke="#a8a8a8" />
            </Icon>
            Изменить тип
          </button>
        </div>
        <table className="w-full table-fixed border-collapse leading-4">
          <colgroup>
            <col className="w-[107px]" />
            <col />
          </colgroup>
          {GROUPS.map(group => (
            <tbody key={group.title}>
              <tr className="h-[18px] bg-[#dcdcdc]">
                <th colSpan={2} className="p-0 pl-[2px] text-left font-normal">
                  <span className="flex items-center justify-between pr-[5px]">
                    {group.title}
                    <Icon w={7} h={9}><path d="M1 4l2.500-2.500L6 4M1 8l2.500-2.500L6 8" stroke="#111" strokeWidth="1.300" /></Icon>
                  </span>
                </th>
              </tr>
              {group.rows.map(row => (
                <tr key={row.name} className="h-[18px] border-b border-dotted border-[#888]">
                  <th scope="row" className={`overflow-hidden border-r border-dotted border-[#888] p-0 pl-2 text-left font-normal whitespace-nowrap ${row.muted ? 'text-[#808080]' : ''}`}>
                    {row.name}
                  </th>
                  <td className="p-0"><PropValue row={row} /></td>
                </tr>
              ))}
            </tbody>
          ))}
        </table>
        <div className="mt-auto flex h-[26px] items-center justify-between bg-[#f0f0f0] pr-[1px] pl-[2px]">
          <a href="#help" className="text-[#0066cc] underline">Справка по свойствам</a>
          <button disabled className="h-[21px] w-[73px] border border-[#bfbfbf] bg-[#cccccc] text-[#838383]">Применить</button>
        </div>
      </div>
    </aside>
  );
}

/* ---------- status bar ---------- */

const SELECT_TOGGLES: { name: string; art: ReactNode }[] = [
  { name: 'Выбор связей', art: <><path d="M1 5c0-3 7-3 7 0s-7 3-7 0" stroke="#c8910f" strokeWidth="2" /><Pointer x={6} y={4} s={0.65} /><RedCross x={10} y={1} /></> },
  { name: 'Выбор подложек', art: <><path d="M1 8l4-5h9M1 8h10M1 12h8" stroke={BLUE} strokeWidth="1.500" /><Pointer x={8} y={4} s={0.65} /></> },
  { name: 'Выбор закреплённых', art: <><path d="M2 1h7v3l-1 3H3L2 4zM1 8h9M5 9v6" stroke="#c8541f" strokeWidth="1.500" /><Pointer x={8} y={5} s={0.6} /><RedCross x={10} y={1} /></> },
  { name: 'Выбор по грани', art: <><path d="M1 3l8-2v11l-8 2z" fill={SKY} stroke={BLUE} /><Pointer x={8} y={4} s={0.65} /></> },
  { name: 'Перетаскивание', art: <><path d="M5 1v9M1 5h9M4 2h2M4 9h2M2 4v2M9 4v2" strokeWidth="1.500" /><Pointer x={9} y={5} s={0.6} /></> },
  { name: 'Фоновые процессы', art: <circle cx="8" cy="8" r="5.500" stroke="#a6a6a6" strokeWidth="3" strokeDasharray="3 1" /> },
];

function StatusBar() {
  return (
    <footer className="flex h-[23px] shrink-0 items-center border-t border-[#858585] bg-linear-to-b from-[#e4e4e4] to-[#c0c0c0] text-black">
      <p className="flex h-full w-[507px] items-center border-r border-[#d6d6d6] pl-[2px] text-xs whitespace-nowrap">
        Щелчок - выбор, TAB - варианты, CTRL - добавление, SHIFT - снятие выбора.
      </p>
      <div className="ml-auto flex h-full items-center gap-[2px] pr-[66px]">
        {SELECT_TOGGLES.map(t => (
          <button key={t.name} aria-label={t.name} className="flex h-[22px] w-6 items-center justify-center bg-[#d9d9d9]">
            <Icon>{t.art}</Icon>
          </button>
        ))}
        <button aria-label="Фильтр" className="ml-[1px] flex items-center">
          <Icon><path d="M1 1h14v2l-5 5v6l-4-2V8L1 3z" fill="#b9c0c9" strokeWidth="1.300" /></Icon>
          <span className="mt-1">:0</span>
        </button>
      </div>
    </footer>
  );
}

export default function App() {
  return (
    <div className="relative flex h-screen min-h-[640px] flex-col overflow-hidden bg-[#f0f0f0] font-['Open_Sans','Noto_Sans',sans-serif] text-[11px] leading-4">
      <TitleBar />
      <TabBar />
      <button aria-label="Меню приложения" className="absolute top-0 left-0 flex h-[41px] w-[41px] items-center gap-[2px] border border-black bg-linear-to-b from-[#c4c4c4] to-[#8c8c8c] pl-1">
        <svg width="25" height="39" viewBox="0 0 25 39" aria-hidden="true">
          <defs>
            <linearGradient id="logo" x1="0" y1="0" x2="0" y2="1">
              <stop offset="0" stopColor="#3a8fd2" />
              <stop offset=".6" stopColor="#1d5fa8" />
              <stop offset="1" stopColor="#5fb7e8" />
            </linearGradient>
          </defs>
          <text x="2" y="30" fontSize="32" fontWeight="700" fill="url(#logo)" stroke="url(#logo)" strokeWidth="2" className="font-['Roboto',sans-serif]">R</text>
        </svg>
        <svg width="7" height="4" viewBox="0 0 7 4" fill="#333" aria-hidden="true"><path d="M0 0h7L3.500 4z" /></svg>
      </button>
      <Ribbon />
      <QuickToolbar />
      <div className="h-[26px] shrink-0 bg-[#e0e1e3]" />
      <div className="flex min-h-0 flex-1">
        <ProjectBrowser />
        <Viewport />
        <PropertiesPanel />
      </div>
      <StatusBar />
    </div>
  );
}
